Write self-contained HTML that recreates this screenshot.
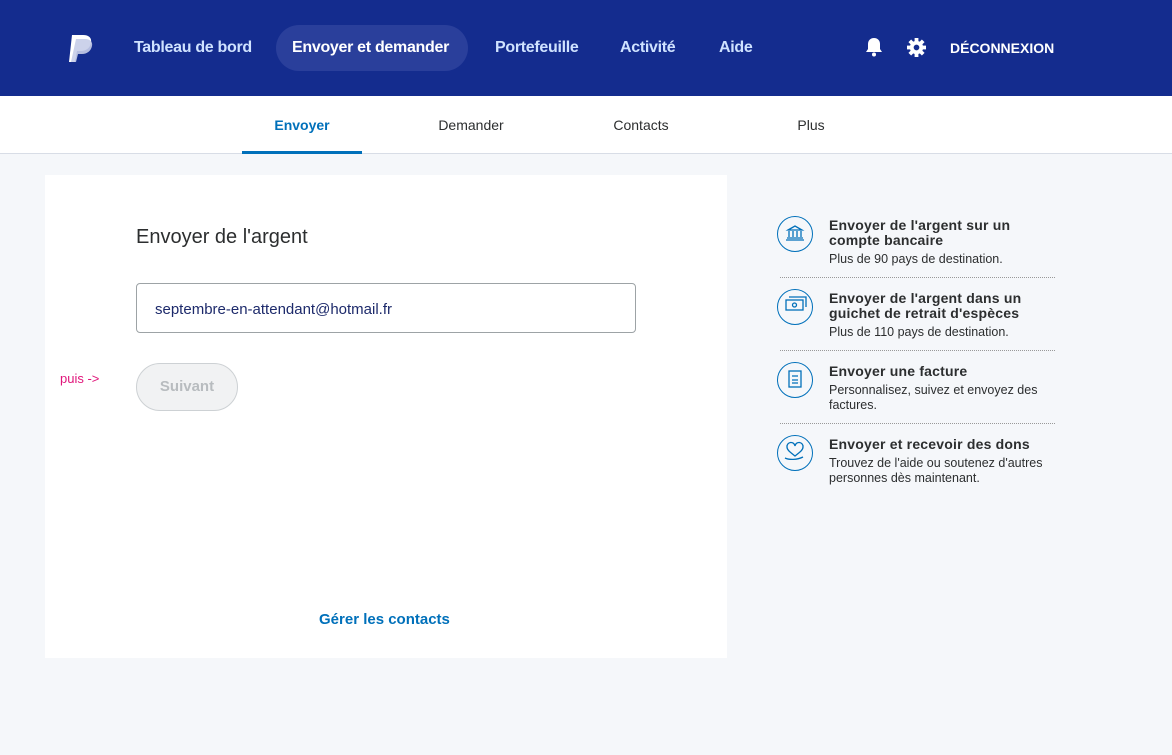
<!DOCTYPE html>
<html><head><meta charset="utf-8"><style>
*{margin:0;padding:0;box-sizing:border-box}
body{width:1172px;height:755px;background:#f5f7fa;font-family:"Liberation Sans",sans-serif;position:relative;overflow:hidden}
.hdr{position:absolute;left:0;top:0;width:1172px;height:96px;background:#142c8e}
.nav{position:absolute;top:48px;transform:translateY(-50%);color:#cfe2ff;font-size:16px;letter-spacing:-0.3px;font-weight:bold;white-space:nowrap}
.pill{position:absolute;left:276px;top:25px;width:192px;height:46px;border-radius:23px;background:#2a3f9b}
.sub{position:absolute;left:0;top:96px;width:1172px;height:58px;background:#fff;border-bottom:1px solid #d8dde6}
.tab{position:absolute;top:125px;transform:translate(-50%,-50%);font-size:14px;color:#2c2e2f;font-weight:bold}
.card{position:absolute;left:45px;top:175px;width:682px;height:483px;background:#fff}
.item{position:absolute;left:777px;width:290px}
.ic{position:absolute;left:0;width:36px;height:36px;border:1.5px solid #0070ba;border-radius:50%}
.t{position:absolute;left:52px;font-size:14px;font-weight:bold;color:#2c2e2f;line-height:15px;letter-spacing:0.2px}
.d{font-size:12.5px;font-weight:normal;line-height:15px;margin-top:4px;letter-spacing:0}
.sep{position:absolute;left:780px;width:275px;border-top:1px dotted #999}
</style></head><body>
<div class="hdr">
<svg style="position:absolute;left:67px;top:33px" width="28" height="30" viewBox="0 0 28 30"><path d="M5 2h11c6 0 9 3 8 8-1 5-5 8-10 8h-4l-2 11H2z" fill="#fff"/><path d="M9 6h9c5 0 8 3 7 7-1 5-5 8-10 8h-4l-2 8H4z" fill="#c6cde8" opacity=".9"/></svg>
<div class="nav" style="left:134px">Tableau de bord</div>
<div class="pill"></div>
<div class="nav" style="left:292px;color:#fff">Envoyer et demander</div>
<div class="nav" style="left:495px">Portefeuille</div>
<div class="nav" style="left:620px">Activité</div>
<div class="nav" style="left:719px">Aide</div>
<svg style="position:absolute;left:865px;top:37px" width="18" height="20" viewBox="0 0 18 20"><path d="M9 1c4 0 6 3 6 6v5l2 3H1l2-3V7c0-3 2-6 6-6z" fill="#fff"/><circle cx="9" cy="17.5" r="2" fill="#fff"/></svg>
<svg style="position:absolute;left:907px;top:38px" width="19" height="19" viewBox="0 0 20 20"><g fill="#fff"><circle cx="10" cy="10" r="7"/><rect x="8" y="0" width="4" height="20"/><rect x="0" y="8" width="20" height="4"/><rect x="8" y="0" width="4" height="20" transform="rotate(45 10 10)"/><rect x="8" y="0" width="4" height="20" transform="rotate(-45 10 10)"/></g><circle cx="10" cy="10" r="3" fill="#142c8e"/></svg>
<div class="nav" style="left:950px;font-size:14px;color:#fff;letter-spacing:0">DÉCONNEXION</div>
</div>
<div class="sub"></div>
<div class="tab" style="left:302px;color:#0070ba">Envoyer</div>
<div style="position:absolute;left:242px;top:151px;width:120px;height:3px;background:#0070ba"></div>
<div class="tab" style="left:471px;font-weight:normal">Demander</div>
<div class="tab" style="left:641px;font-weight:normal">Contacts</div>
<div class="tab" style="left:811px;font-weight:normal">Plus</div>
<div class="card"></div>
<div style="position:absolute;left:136px;top:226px;font-size:20px;color:#2c2e2f">Envoyer de l'argent</div>
<div style="position:absolute;left:136px;top:283px;width:500px;height:50px;border:1px solid #9da3a6;border-radius:4px;background:#fff;padding:17px 0 0 18px;font-size:15px;color:#1d2a6b">septembre-en-attendant@hotmail.fr</div>
<div style="position:absolute;left:60px;top:371px;font-size:13px;color:#e0157a">puis -&gt;</div>
<div style="position:absolute;left:136px;top:363px;width:102px;height:48px;border:1px solid #cdd1d4;border-radius:24px;background:#f1f2f3;color:#b8bcbf;font-size:15px;font-weight:bold;text-align:center;line-height:46px">Suivant</div>
<div style="position:absolute;left:319px;top:611px;font-size:15px;font-weight:bold;color:#0070ba">Gérer les contacts</div>

<div class="item" style="top:216px"><div class="ic"></div><div class="t" style="top:2px">Envoyer de l'argent sur un<br>compte bancaire<div class="d">Plus de 90 pays de destination.</div></div></div>
<div class="sep" style="top:277px"></div>
<div class="item" style="top:289px"><div class="ic"></div><div class="t" style="top:2px">Envoyer de l'argent dans un<br>guichet de retrait d'espèces<div class="d">Plus de 110 pays de destination.</div></div></div>
<div class="sep" style="top:350px"></div>
<div class="item" style="top:362px"><div class="ic"></div><div class="t" style="top:2px">Envoyer une facture<div class="d">Personnalisez, suivez et envoyez des<br>factures.</div></div></div>
<div class="sep" style="top:423px"></div>
<div class="item" style="top:435px"><div class="ic"></div><div class="t" style="top:2px">Envoyer et recevoir des dons<div class="d">Trouvez de l'aide ou soutenez d'autres<br>personnes dès maintenant.</div></div></div>
<svg style="position:absolute;left:777px;top:216px" width="290" height="260" viewBox="0 0 290 260" fill="none" stroke="#0070ba" stroke-width="1.3">
<path d="M11 14l7-4 7 4zM12 15v6M16 15v6M20 15v6M24 15v6M10 22h16M9 24h18"/>
<rect x="9" y="84" width="17" height="10"/><path d="M12 81h17v10"/><circle cx="17.5" cy="89" r="2"/>
<rect x="12" y="155" width="12" height="16"/><path d="M15 160h6M15 164h6M15 167h6"/>
<path d="M18 240c-5-4-8-6-8-9a3.5 3.5 0 0 1 8-1 3.5 3.5 0 0 1 8 1c0 3-3 5-8 9zM8 242c4 2 12 2 18-1"/>
</svg>
</body></html>
